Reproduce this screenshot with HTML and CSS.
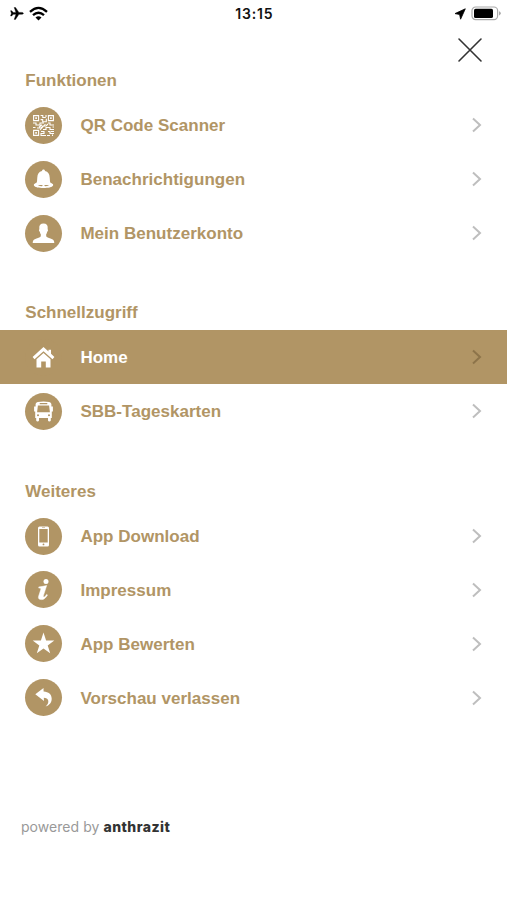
FILE: index.html
```html
<!DOCTYPE html>
<html lang="de">
<head>
<meta charset="utf-8">
<title>Menü</title>
<link rel="stylesheet" href="styles.css">
</head>
<body>
<header class="status">
  <div class="status-left">
    <svg width="14" height="13" viewBox="0 0 14 13"><path stroke="#000" stroke-width=".4" d="M13.4 6.3C13.4 5.7 12.5 5.4 11.6 5.4H8.9L5.5.4H4.2L6 5.4H3.2L1.7 3.7H.6L1.4 6.3.6 9H1.7L3.2 7.3H6L4.2 12.4H5.5L8.9 7.3h2.7c.9 0 1.800-.4 1.800-1Z"/></svg>
    <svg class="wifi" width="19" height="15" viewBox="0 0 19 15"><g fill="none" stroke="#000" stroke-width="2.3"><path d="M1 5.8Q9.5-2 18 5.8"/><path d="M4 9.2Q9.5 4.2 15 9.2"/></g><path d="M6.5 11.4Q9.5 8.9 12.5 11.4L9.5 14.4Z"/></svg>
  </div>
  <div class="time">13:15</div>
  <div class="status-right">
    <svg width="12" height="12" viewBox="0 0 12 12"><path d="M11.300.8 1 5.600 5.600 6.500 6.600 11.200Z" stroke="#000" stroke-width=".8" stroke-linejoin="round"/></svg>
    <svg width="31" height="15" viewBox="0 0 31 15"><rect x="1" y="1" width="25.6" height="12.6" rx="3.6" fill="#fff" stroke="#aaa" stroke-width="1.2"/><rect x="3" y="2.7" width="19" height="9.3" rx="1.6"/><path d="M28 5.2q1.8.7 1.8 2.1T28 9.4Z" fill="#aaa"/></svg>
  </div>
</header>
<div class="close-row">
  <svg width="26" height="26" viewBox="0 0 26 26"><path d="M2 2 24 24M24 2 2 24" fill="none" stroke="#333" stroke-width="1.6" stroke-linecap="round"/></svg>
</div>
<nav>
  <section>
    <h2>Funktionen</h2>
    <a class="row"><span class="icon"><svg viewBox="0 0 37 37"><g fill="none" stroke="#fff" stroke-width="1.1"><path d="M8.6 8.6h5v5h-5ZM23.4 8.6h5v5h-5ZM8.6 23.4h5v5h-5Z"/><path d="M15.6 8.5h2.2v2h3M15.6 12.6h2.1v2.2h3.6v-3M8 16h3v2h4v-2h4M23 16h2v2h4M8 20.5h2.5M12 21h4l2-2h3l2-2M18 22.5h3v-2h4v2h4M16 24.5h3v2h-3v2h5M23 24.5h2v2h4M22 28.5h3M27.5 20h1.5M17 17.8l-3 2.4M20.5 17l-5.5 6M26 24.5h3M21 10v-2M27.5 27.5v1.5"/></g><path d="M10.3 10.3h1.6v1.6h-1.6ZM25.1 10.3h1.6v1.6h-1.6ZM10.3 25.1h1.6v1.6h-1.6Z"/></svg></span><span class="label">QR Code Scanner</span><svg class="chev" viewBox="0 0 12 16"><path d="m2 1.6 7 6.4-7 6.4"/></svg></a>
    <a class="row"><span class="icon"><svg viewBox="0 0 37 37"><path d="M18.500 8.500c.9 0 1.500.7 1.500 1.600 3.200.8 4.500 3.100 4.700 6.300l.3 4.200q.2 1.400 1.800 2.300h-16.600q1.600-.9 1.800-2.300l.3-4.200c.2-3.200 1.500-5.500 4.700-6.300 0-.9.600-1.600 1.500-1.600Z"/><path fill-rule="evenodd" d="M10.400 22.300h16.200q2.200.8 1.500 2.300c-.9 1.800-4.900 2.500-9.600 2.500s-8.700-.7-9.600-2.500q-.7-1.500 1.500-2.300ZM12.800 24.100q2 1.200 4.200 1.200l.8-1.200ZM24.200 24.100q-2 1.200-4.200 1.200l-.8-1.200Z"/></svg></span><span class="label">Benachrichtigungen</span><svg class="chev" viewBox="0 0 12 16"><path d="m2 1.6 7 6.4-7 6.4"/></svg></a>
    <a class="row"><span class="icon"><svg viewBox="0 0 37 37"><path d="M18.5 8.4c3 0 4.400 1.500 4.200 4.500l-.1 1.400c.8.4.4 2-.4 2.500-.3 1.200-.5 1.800-1 2.400v2c.7 1.300 2.200 1.600 4.300 2.300 2.800.8 3.700 1.800 3.800 4.500H7.700c.1-2.700 1-3.700 3.800-4.500 2.100-.7 3.600-1 4.300-2.300v-2c-.5-.6-.7-1.200-1-2.400-.8-.5-1.200-2.100-.4-2.500l-.1-1.400c-.2-3 1.200-4.500 4.200-4.500Z"/></svg></span><span class="label">Mein Benutzerkonto</span><svg class="chev" viewBox="0 0 12 16"><path d="m2 1.6 7 6.4-7 6.4"/></svg></a>
  </section>
  <section>
    <h2>Schnellzugriff</h2>
    <a class="row active"><span class="icon"><svg viewBox="0 0 37 37"><path d="M18.500 7.900 23.500 12.500V10.700h2.500v4.100L29.400 18.100 27.500 20.300 18.500 12.200 9.500 20.300 7.600 18.100Z"/><path d="m18.500 13.900 7 6.300V28.500H20.800V22.500H16.200V28.500H11.500V20.200Z"/></svg></span><span class="label">Home</span><svg class="chev" viewBox="0 0 12 16"><path d="m2 1.6 7 6.4-7 6.400"/></svg></a>
    <a class="row"><span class="icon"><svg viewBox="0 0 37 37"><path fill-rule="evenodd" d="M12.700 8.900q5.800-1 11.600 0 1.800.2 2.100 2.200v2.500h1.500v5h-1.100V25h-1v2.500q-.3 1-1.400 1t-1.400-1V25h-9v2.500q-.3 1-1.400 1t-1.400-1V25h-1v-6.400H9.100v-5h1.500v-2.500q.3-2 2.100-2.200ZM14.700 10v1.200h7.600V10ZM12.900 12.500l-.8 6.700h12.800l-.8-6.700ZM13 21.200a1 1 0 1 0 0 2 1 1 0 0 0 0-2ZM24 21.200a1 1 0 1 0 0 2 1 1 0 0 0 0-2Z"/></svg></span><span class="label">SBB-Tageskarten</span><svg class="chev" viewBox="0 0 12 16"><path d="m2 1.6 7 6.4-7 6.4"/></svg></a>
  </section>
  <section>
    <h2>Weiteres</h2>
    <a class="row"><span class="icon"><svg viewBox="0 0 37 37"><path fill-rule="evenodd" d="M14.500 8.500h8q1.500 0 1.500 1.500v17q0 1.500-1.500 1.500h-8Q13 28.500 13 27V10q0-1.500 1.500-1.500ZM14.300 11v13.400h8.400V11ZM18.500 25.500a.9.9 0 1 0 0 1.800.9.9 0 0 0 0-1.800ZM17 9.500v.6h3v-.6Z"/></svg></span><span class="label">App Download</span><svg class="chev" viewBox="0 0 12 16"><path d="m2 1.6 7 6.4-7 6.4"/></svg></a>
    <a class="row"><span class="icon"><svg viewBox="0 0 37 37"><circle cx="21" cy="10.400" r="2.500"/><path stroke="#fff" stroke-width=".5" d="M13.800 15.900q4.200-.4 7.900-1.400l-3.200 9.800q-.5 1.700.3 1.700c.9 0 1.900-1.200 2.800-2.600l.9.500c-1.800 3.200-3.600 4.700-6.200 4.700-2.400 0-3.300-1.300-2.700-3.300l2.100-6.500c.4-1.300 0-1.700-1.900-1.700Z"/></svg></span><span class="label">Impressum</span><svg class="chev" viewBox="0 0 12 16"><path d="m2 1.6 7 6.4-7 6.4"/></svg></a>
    <a class="row"><span class="icon"><svg viewBox="0 0 37 37"><path d="m18.500 7.600 2.600 7.800 8.200.1-6.600 4.900 2.500 7.900-6.700-4.800-6.700 4.800 2.500-7.900-6.600-4.900 8.200-.1Z"/></svg></span><span class="label">App Bewerten</span><svg class="chev" viewBox="0 0 12 16"><path d="m2 1.6 7 6.4-7 6.4"/></svg></a>
    <a class="row"><span class="icon"><svg viewBox="0 0 37 37"><path d="M10.300 15.200 18.500 8.900l.1 3.700c5 .3 8.100 2.800 8.100 7.200 0 3.900-2.500 6.700-6.100 7.700 2.200-2.200 3.100-4.200 2.600-6.100-.5-1.900-2-2.600-4.400-2.700l.2 3.400Z"/></svg></span><span class="label">Vorschau verlassen</span><svg class="chev" viewBox="0 0 12 16"><path d="m2 1.6 7 6.4-7 6.4"/></svg></a>
  </section>
</nav>
<footer><span class="by">powered by</span><b>anthrazit</b></footer>
</body>
</html>
```
FILE: styles.css
```css
* { box-sizing: border-box; }
body {
  margin: 0;
  height: 900px;
  overflow: hidden;
  background: #fff;
  color: #b19565;
  font-family: "Liberation Sans", Arial, sans-serif;
}
svg { display: block; flex: none; }
.status {
  display: grid;
  grid-template-columns: 1fr auto 1fr;
  align-items: center;
  height: 27px;
  padding: 0 5px 0 9.500px;
}
.status-left, .status-right { display: flex; align-items: center; gap: 5px; }
.status-right { justify-content: flex-end; }
.wifi { margin-top: -1px; }
.time {
  margin-right: 3px;
  color: #111;
  font: 600 14px/27px Inter, sans-serif;
  letter-spacing: 0.8px;
}
.close-row {
  display: flex;
  justify-content: flex-end;
  height: 39px;
  padding: 9.500px 23.700px 0 0;
}
nav { display: flex; flex-direction: column; gap: 37.800px; }
section { display: flex; flex-direction: column; }
h2 {
  margin: 0;
  height: 32.500px;
  padding-left: 25.300px;
  font-size: 17px;
  line-height: 29.400px;
}
section:last-child h2 { height: 33.300px; line-height: 31.400px; }
.row {
  display: flex;
  align-items: center;
  height: 53.850px;
  padding: 0 24px 0 25px;
  font-size: 17px;
  font-weight: bold;
}
.icon {
  width: 37px;
  height: 37px;
  margin-right: 18.400px;
  border-radius: 50%;
  background: #b19565;
}
.icon svg { width: 37px; height: 37px; fill: #fff; }
.label { flex: 1; padding-top: 2px; letter-spacing: 0.02px; }
.chev {
  width: 12px;
  height: 16px;
  fill: none;
  stroke: #bebebe;
  stroke-width: 2;
}
.active { background: #b19565; color: #fff; }
.active .chev { stroke: #8d744a; }
footer {
  display: flex;
  gap: 4px;
  margin-top: 93px;
  padding-left: 21px;
  font: 14px/20px Inter, sans-serif;
  color: #999;
}
.by { letter-spacing: 0.05px; }
footer b { color: #333; font-weight: 800; letter-spacing: 0.45px; }
```
